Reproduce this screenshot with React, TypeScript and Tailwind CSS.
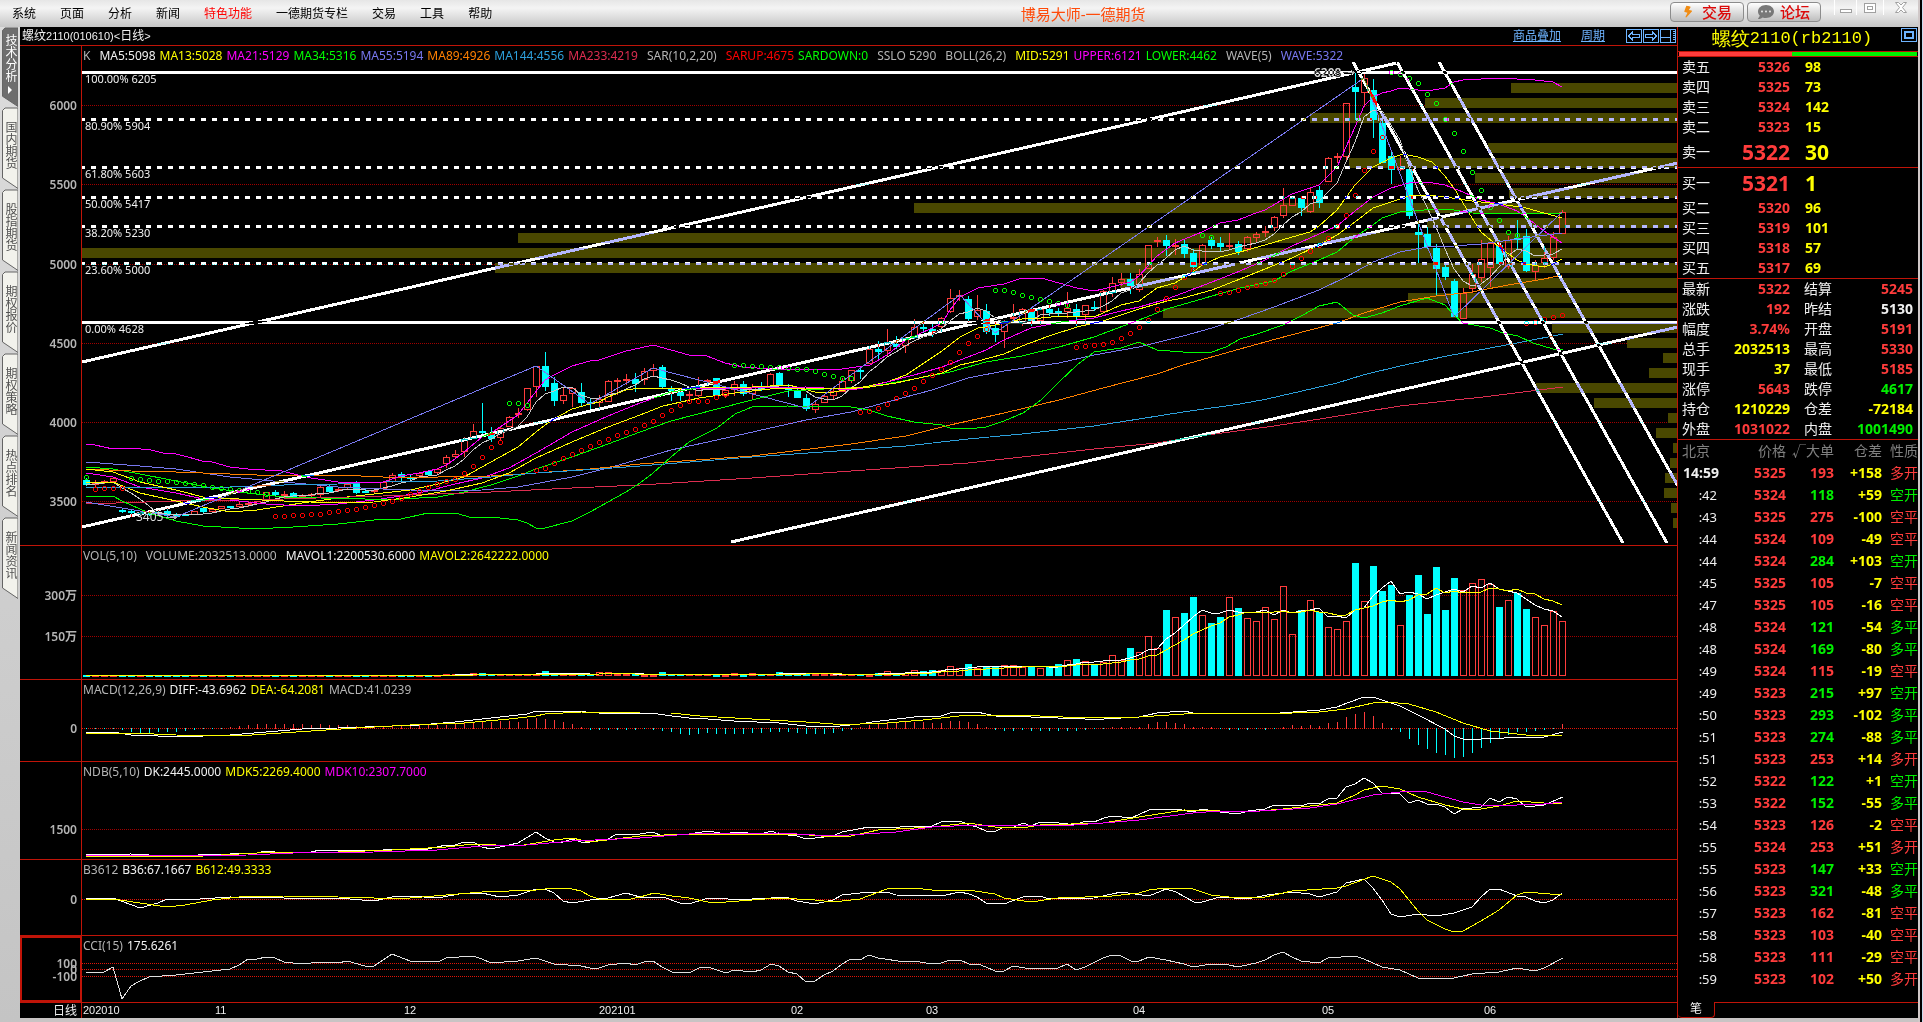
import { FaBolt, FaCommentDots } from "react-icons/fa";

const LEFT = 82;
const STEP = 9;
const xOf = (i: number) => 86 + i * STEP;

// c = falling, r = rising, then body top, body bottom, high, low
const CANDLES = `c480 485 478 486,r483 485 480 487,r481 483 480 484,r478 482 477 483,c510 511 509 513,c511 513 509 517,r512 513 511 516,c513 514 511 516,c512 514 510 516,c511 515 508 517,c514 517 513 518,c514 515 513 516,r511 515 511 515,c508 512 508 513,r509 512 508 513,r506 509 506 509,c506 508 506 509,r504 507 501 507,r503 505 501 507,r501 504 501 504,r492 500 492 501,c492 495 490 496,r494 495 491 498,c493 497 492 497,r495 496 494 498,r494 496 493 497,r487 495 485 497,c487 492 485 493,r489 490 487 492,r484 488 482 490,c484 493 481 494,c491 492 489 493,r490 492 488 494,r482 489 481 490,r475 482 473 483,c474 478 472 481,c477 478 475 481,r473 476 472 477,c471 475 470 476,r469 473 468 475,r457 464 455 468,r454 457 450 458,r439 452 437 457,r431 439 424 439,c431 433 403 434,c433 439 427 442,r428 438 426 441,r417 427 416 427,r413 415 408 418,r388 410 388 411,r366 387 366 397,c366 387 352 391,c383 401 377 406,r395 401 388 404,r388 394 387 407,c392 403 383 406,c402 404 398 409,r399 403 395 409,r381 402 380 402,r380 382 378 395,r379 380 374 385,c379 384 373 392,
r371 380 368 385,r368 371 364 376,c367 387 365 388,c388 391 386 401,c392 396 388 401,r394 395 391 402,r386 396 377 397,r380 381 379 385,c378 395 378 395,r390 396 388 398,r384 390 381 396,c384 394 381 396,r387 394 384 400,c387 389 382 391,r374 387 373 388,c373 385 372 385,c388 390 384 397,c391 398 389 398,c398 409 394 411,r404 410 402 413,r396 403 395 403,r391 396 389 400,r381 392 378 392,r370 381 370 383,c370 371 367 379,r349 364 346 364,c349 352 341 360,r342 351 329 357,c344 347 336 349,r338 346 337 353,r327 338 319 339,c327 329 322 333,c329 332 324 337,r318 327 317 332,r298 312 289 313,r295 297 290 301,c299 319 296 322,r310 317 295 320,c311 332 304 334,c328 335 322 342,r321 332 320 348,r317 318 304 322,r309 323 308 326,c309 321 308 326,r309 321 308 325,c309 313 305 316,c311 313 308 317,r308 312 292 318,c309 316 304 326,r305 315 305 325,c307 309 301 311,r291 312 290 313,r283 293 277 297,r279 283 273 286,c279 286 273 294,r274 290 269 292,r245 269 245 269,r240 242 237 247,c240 246 235 256,r245 246 239 255,c244 254 240 258,c253 267 249 270,
r245 265 244 266,c240 246 237 249,c243 247 237 251,r245 246 233 250,c244 252 241 255,r237 249 236 252,r234 238 232 242,r231 233 226 237,r217 228 216 231,r205 216 188 218,r198 206 197 206,c198 208 196 216,r192 212 187 213,c190 203 186 208,r158 182 157 182,r156 158 153 163,r103 157 103 160,c87 92 73 120,r78 93 74 107,c90 120 79 138,c123 163 121 163,c156 170 151 184,r167 170 156 171,c169 216 168 219,c232 235 222 263,c234 247 227 249,c248 269 244 295,c267 277 265 280,c281 317 279 317,r293 319 288 319,r274 289 264 293,r259 278 240 282,r243 268 243 287,c245 264 240 264,r240 267 236 269,c238 239 220 249,c236 271 229 272,r265 272 260 281,r258 263 246 268,r237 258 232 260,r212 234 210 234`
  .split(",")
  .map((s) => {
    const t = s.trim();
    const [top, bottom, high, low] = t.slice(1).split(" ").map(Number);
    return { up: t[0] === "r", top, bottom, high, low };
  });

const VOLUME_TAIL = [
  675, 675, 672, 674, 674, 674, 674, 674, 675, 675, 673, 675, 673, 674, 674, 672,
  673, 673, 673, 674, 674, 674, 674, 674, 674, 675, 673, 671, 674, 673, 670, 671,
  670, 670, 666, 668, 664, 668, 666, 667, 665, 665, 667, 667, 668, 667, 664, 660,
  659, 661, 664, 662, 655, 660, 648, 652, 636, 648, 610, 617, 613, 597, 615, 623,
  617, 597, 608, 618, 621, 607, 619, 586, 634, 610, 600, 612, 627, 629, 621, 563,
  601, 566, 591, 585, 625, 595, 575, 614, 567, 610, 578, 590, 583, 579, 584, 607,
  600, 593, 609, 617, 625, 611, 621,
];
const VOLUMES = CANDLES.map((_, i) => {
  if (i >= 62) return VOLUME_TAIL[i - 62];
  if (i === 51) return 671;
  if (i === 57 || i === 58) return 672;
  if (i === 43 || i === 44) return 673;
  return i >= 40 ? 674 : 675;
});

const MACD = [
  0, 0, 0, 0, -1, -3, -4, -4, -3, -3, -3, -2, -1, 0, 0, 0, 1, 2, 3, 4, 4, 4, 4, 4,
  4, 3, 4, 3, 3, 3, 2, 2, 2, 2, 2, 3, 3, 3, 3, 3, 3, 4, 5, 5, 6, 6, 7, 7, 6, 9, 10,
  9, 8, 6, 4, 1, -1, -1, -1, -1, -1, -1, 0, -1, -2, -3, -5, -6, -5, -4, -5, -5, -5,
  -5, -4, -4, -3, -3, -3, -4, -5, -5, -5, -4, -2, -1, 1, 3, 5, 6, 6, 6, 6, 6, 5, 5,
  7, 7, 6, 4, 1, -1, -2, -2, -1, -2, -2, -2, -2, -2, -2, -1, 0, 0, 1, 1, 1, 1, 4,
  6, 6, 5, 4, 1, 1, 1, 0, -1, -1, -1, 0, -1, 0, 1, 3, 2, 3, 2, 5, 6, 11, 14, 16,
  12, 5, -1, -3, -10, -16, -20, -24, -26, -29, -28, -24, -19, -14, -10, -6, -3, -3,
  -2, -1, 0, 4,
];

function average(values: number[], size: number) {
  return values
    .map((_, i) => {
      const part = values.slice(Math.max(0, i - size + 1), i + 1);
      const mean = part.reduce((a, b) => a + b, 0) / part.length;
      return `${xOf(i)},${Math.round(mean)}`;
    })
    .join(" ");
}

const MA5 = average(
  CANDLES.map((c) => (c.up ? c.top : c.bottom)),
  5,
);

const PRICE_LINES: [string, string][] = [
  ["#c8c8c8", MA5],
  // MA13
  ["#ffff00", "86,482 113,482 140,493 176,501 203,507 230,512 257,510 302,503 338,498 374,494 410,490 438,484 464,477 482,467 500,457 518,447 536,432 545,425 554,419 572,409 590,404 599,402 608,397 626,390 640,388 690,388 752,387 789,385 797,387 815,392 828,393 851,389 869,386 887,382 906,375 924,363 942,351 960,337 978,328 986,327 1004,323 1022,319 1041,318 1061,316 1094,317 1103,313 1121,305 1139,301 1157,288 1175,283 1193,272 1202,265 1220,257 1240,252 1265,245 1292,237 1310,232 1319,226 1337,210 1355,185 1373,167 1391,158 1403,154 1418,157 1432,162 1445,176 1454,188 1472,218 1481,232 1499,247 1517,260 1526,264 1544,267 1553,264 1562,259"],
  // MA21
  ["#ff00ff", "86,473 113,477 140,487 176,493 203,499 239,501 266,504 302,506 338,504 374,500 401,496 428,491 455,484 482,478 509,468 536,453 572,432 608,416 640,403 671,392 699,388 752,388 806,387 824,388 851,390 869,387 887,382 914,375 942,367 968,357 986,350 1004,340 1031,328 1061,322 1094,318 1121,311 1139,307 1167,299 1183,293 1212,282 1240,271 1265,260 1292,246 1319,234 1337,226 1355,211 1373,197 1391,188 1409,183 1427,182 1445,185 1463,192 1481,200 1499,204 1517,211 1526,217 1544,231 1562,243"],
  // MA34
  ["#00ff00", "86,467 113,469 140,474 176,481 212,488 248,493 284,497 320,498 365,499 401,499 438,497 464,492 491,485 518,476 536,469 572,457 608,444 640,432 671,421 717,409 752,400 788,391 824,389 869,387 914,379 950,372 986,362 1022,356 1059,347 1094,337 1139,320 1167,309 1212,296 1240,288 1274,281 1292,271 1319,260 1337,252 1355,237 1373,225 1382,218 1400,212 1436,209 1454,210 1472,213 1562,214"],
  // MA55
  ["#7878f0", "86,462 140,466 176,469 230,477 284,482 338,487 383,489 438,491 482,490 518,487 545,482 572,477 608,468 640,459 671,450 717,440 806,420 851,412 887,402 932,390 968,378 1004,371 1059,363 1094,355 1139,347 1183,336 1212,328 1240,319 1274,307 1319,290 1346,277 1373,262 1400,252 1427,247 1454,246 1481,244 1517,239 1562,233"],
  // MA89
  ["#ff8000", "86,469 131,471 176,472 257,475 338,475 383,477 438,477 491,476 536,473 590,469 640,464 752,456 851,444 906,436 950,425 1004,413 1059,400 1103,388 1157,374 1183,365 1240,349 1276,339 1310,330 1337,323 1364,313 1400,302 1436,296 1472,292 1508,285 1544,279 1562,275"],
  // MA144
  ["#2da0dc", "86,488 122,487 203,488 284,485 338,484 383,482 438,481 491,477 536,473 599,469 640,466 752,457 851,450 906,446 968,439 1022,434 1094,426 1139,419 1183,412 1240,404 1267,399 1337,383 1363,375 1400,366 1447,356 1517,343 1563,334"],
  // MA233
  ["#dc2d50", "86,504 176,501 284,499 383,496 491,492 572,488 640,485 752,478 851,471 968,463 1094,449 1157,443 1200,436 1267,427 1320,419 1400,406 1483,397 1563,387"],
  // BOLL MID, UPPER, LOWER
  ["#ffff00", "86,469 113,472 140,482 176,490 203,497 239,499 284,501 338,503 374,502 410,497 446,491 482,483 509,473 536,458 572,442 608,427 640,415 663,406 699,398 735,393 770,389 806,388 851,388 870,387 896,383 914,379 942,373 960,365 978,361 1004,354 1022,346 1049,336 1077,327 1103,321 1139,309 1167,301 1183,298 1212,290 1240,279 1265,269 1292,258 1319,245 1337,235 1355,222 1373,208 1391,202 1409,196 1427,195 1445,197 1472,201 1499,204 1526,208 1544,213 1562,218"],
  ["#ff00ff", "86,444 95,445 113,449 131,448 151,450 163,453 176,454 188,457 202,461 212,462 230,467 248,469 282,471 294,474 311,478 338,482 356,483 365,482 383,482 401,476 419,473 437,469 446,465 455,459 464,452 482,437 491,433 509,421 518,415 527,403 545,380 554,375 572,366 590,361 599,360 608,357 626,351 640,348 653,345 671,350 689,355 707,356 725,363 743,367 770,369 842,369 870,365 887,355 906,340 932,328 942,323 950,310 960,297 978,288 1004,284 1022,278 1041,278 1059,283 1077,288 1094,291 1103,289 1131,282 1139,276 1157,256 1175,243 1202,232 1220,223 1238,220 1256,213 1265,210 1292,194 1319,185 1337,167 1355,127 1364,106 1373,97 1382,93 1391,91 1400,88 1427,91 1445,88 1454,82 1463,80 1499,78 1535,80 1553,82 1562,87"],
  ["#00ff00", "86,496 113,496 122,501 149,513 176,521 203,526 239,528 273,528 293,527 338,524 374,520 401,519 428,513 455,513 473,518 491,517 518,520 527,523 536,528 545,528 572,521 590,512 608,502 626,492 640,483 653,473 671,457 689,442 717,428 735,414 752,407 788,406 806,407 833,406 851,407 869,410 887,416 914,422 942,425 950,428 968,429 986,427 1004,421 1023,413 1041,400 1059,382 1077,365 1094,352 1121,348 1139,342 1157,350 1183,352 1212,352 1226,347 1240,339 1257,334 1283,325 1303,315 1319,306 1337,302 1353,315 1364,318 1382,313 1400,306 1427,298 1445,305 1454,315 1463,323 1490,328 1503,333 1518,336 1533,343 1553,349 1563,350"],
  // WAVE
  ["#7878f0", "86,502 176,517 536,366 590,404 653,368 806,408 960,295 995,333 1364,78 1454,317 1562,212"],
];

// first bar index, then one y per bar
const SAR_DOWN: [number, number[]][] = [
  [0, [477]],
  [5, [478, 479, 480, 481, 481, 482, 483, 484, 485, 487, 488, 489, 490, 491, 492, 494]],
  [47, [403, 403, 405]],
  [72, [365, 365, 366, 366, 367, 367, 368, 369, 369, 371, 374, 376, 378, 378]],
  [101, [290, 290, 292, 295, 297, 299, 301, 303, 305]],
  [124, [235, 237]],
  [145, [72, 74, 78, 83, 94, 103, 119, 133, 151, 172, 190, 207, 220, 232, 235]],
];
const SAR_UP: [number, number[]][] = [
  [1, [489, 488, 488, 488]],
  [21, [516, 516, 515, 515, 514, 514, 512, 511, 510, 509, 507, 505, 503, 501, 498, 494, 491, 487, 484, 481, 479, 473, 466, 457, 447, 442]],
  [50, [470, 468, 463, 458, 454, 450, 446, 442, 439, 435, 432, 429, 425, 421, 415, 410, 405, 401, 401, 401, 397, 394]],
  [86, [412, 411, 408, 404, 398, 393, 388, 381, 375, 369, 362, 352, 343, 336, 329]],
  [110, [347, 346, 345, 344, 342, 338, 333, 327, 320, 309, 298, 287, 277, 270]],
  [126, [293, 292, 290, 287, 285, 283, 280, 274, 266, 258, 251, 245, 238, 226, 215, 195, 170, 151, 137]],
  [160, [323, 322, 319, 317, 315]],
];

// left edge and top of each volume-at-price bar
const PROFILE = [
  [1511, 83], [1425, 98], [1310, 113], [1488, 143], [1349, 158], [1475, 173],
  [1509, 188], [914, 203], [1427, 218], [518, 233], [82, 248], [495, 263],
  [1120, 278], [1408, 293], [1163, 308], [1552, 323], [1627, 338], [1663, 353],
  [1649, 368], [1536, 383], [1594, 398], [1668, 413], [1656, 428], [1673, 443],
  [1670, 458], [1665, 473], [1664, 488], [1671, 503], [1673, 518],
];

const FIB = [
  { y: 72, label: "100.00% 6205", solid: true },
  { y: 119, label: "80.90% 5904", solid: false },
  { y: 167, label: "61.80% 5603", solid: false },
  { y: 197, label: "50.00% 5417", solid: false },
  { y: 226, label: "38.20% 5230", solid: false },
  { y: 263, label: "23.60% 5000", solid: false },
  { y: 322, label: "0.00% 4628", solid: true },
];

const TREND = [
  [82, 362, 1397, 63],
  [82, 527, 1678, 163],
  [731, 542, 1678, 327],
  [1353, 62, 1623, 543],
  [1397, 62, 1667, 543],
  [1439, 62, 1678, 486],
];

const MACD_LINES: [string, string][] = [
  ["#ffffff", "86,733 113,732 131,735 158,736 203,736 230,735 266,732 302,729 338,728 392,726 419,725 455,722 482,719 509,716 527,714 536,711 572,711 599,713 651,713 672,716 689,718 708,719 734,721 779,723 815,727 840,726 860,724 872,722 914,717 941,716 950,713 977,712 995,716 1031,717 1085,719 1104,719 1139,717 1157,713 1184,711 1193,713 1267,714 1320,710 1337,707 1347,703 1364,697 1373,697 1400,706 1418,715 1445,729 1454,736 1463,739 1481,739 1490,738 1499,739 1510,737 1544,737 1563,732"],
  ["#ffff00", "86,733 131,733 176,735 239,736 266,734 311,731 356,728 410,725 464,723 509,719 536,716 545,714 581,712 640,713 671,713 700,716 752,719 806,722 833,724 860,724 887,723 923,720 959,716 986,715 1040,716 1085,718 1139,717 1184,714 1202,713 1292,713 1319,712 1346,709 1373,703 1386,702 1409,704 1436,712 1463,723 1490,731 1526,735 1562,735"],
];

const NDB_LINES: [string, string][] = [
  ["#ffffff", "86,855 131,854 167,856 230,854 257,853 266,851 284,853 311,852 320,850 347,850 374,851 392,849 401,850 428,849 446,845 455,845 464,842 473,842 482,847 491,849 509,845 518,843 536,832 545,838 554,842 563,842 572,839 581,842 590,842 608,839 617,834 640,834 653,832 662,836 689,834 708,831 726,834 734,832 761,834 771,831 779,834 797,836 806,839 824,837 835,835 842,832 869,827 896,828 904,826 932,826 941,822 960,821 969,825 977,827 986,831 996,831 1004,827 1014,827 1023,823 1031,826 1040,822 1059,823 1076,825 1085,821 1094,822 1104,818 1112,816 1131,818 1149,810 1176,809 1193,812 1202,809 1220,812 1238,814 1248,811 1265,809 1274,805 1301,806 1310,803 1319,804 1328,799 1337,798 1346,787 1355,784 1364,778 1373,783 1382,793 1400,794 1409,803 1418,800 1427,804 1436,804 1445,807 1454,814 1463,809 1481,807 1490,798 1499,802 1508,797 1517,799 1526,807 1544,805 1563,797"],
  ["#ffff00", "86,856 203,856 257,853 338,852 392,850 446,847 473,844 518,846 554,840 572,838 590,842 640,836 689,834 797,834 833,837 851,836 878,830 932,827 968,823 995,827 1022,828 1040,825 1103,823 1139,817 1184,810 1220,811 1247,812 1283,809 1337,803 1355,795 1364,790 1382,786 1400,789 1418,797 1445,805 1463,809 1481,809 1499,806 1517,801 1544,803 1562,803"],
  ["#ff00ff", "86,856 248,855 293,853 374,852 437,850 482,846 527,845 572,841 640,838 689,834 779,833 833,836 896,832 932,827 977,825 1059,826 1103,823 1139,820 1193,813 1220,811 1260,811 1310,808 1337,804 1373,795 1409,791 1427,792 1445,797 1463,802 1481,805 1517,805 1544,804 1562,802"],
];

const B3612_LINES: [string, string][] = [
  ["#ffffff", "86,899 113,898 140,908 158,903 167,899 185,900 230,897 284,898 311,899 338,898 374,901 392,897 410,896 438,898 464,893 482,893 500,897 518,895 536,889 545,889 554,893 563,901 572,903 590,900 608,898 626,893 640,897 663,897 680,903 689,904 708,898 722,898 734,900 771,898 786,897 797,901 815,904 833,900 842,895 869,892 887,892 896,895 941,896 960,892 969,894 977,897 986,903 1004,904 1023,897 1040,896 1049,899 1094,898 1121,892 1149,896 1166,889 1176,892 1194,902 1202,902 1220,897 1247,899 1267,895 1292,892 1310,894 1319,897 1337,892 1346,883 1364,879 1373,888 1382,900 1391,914 1400,917 1418,914 1436,916 1454,913 1472,907 1481,897 1490,889 1499,889 1517,896 1526,897 1535,901 1544,903 1553,900 1562,893"],
  ["#ffff00", "86,899 113,899 140,903 167,907 185,905 212,900 239,897 284,896 311,896 338,897 374,898 410,898 446,895 482,892 536,890 554,888 572,889 581,891 590,896 599,899 626,900 640,897 654,893 672,896 689,898 708,902 726,902 752,900 779,898 815,900 833,902 860,899 887,889 914,888 941,891 968,890 995,894 1004,898 1031,902 1058,898 1112,896 1139,893 1149,890 1166,888 1184,888 1193,889 1211,895 1238,898 1265,897 1292,891 1337,888 1346,886 1373,876 1391,882 1400,889 1418,911 1427,920 1445,929 1454,932 1463,931 1472,926 1481,921 1499,910 1517,895 1526,892 1562,895"],
];

const CCI_LINES: [string, string][] = [
  ["#e0e0e0", "86,973 104,972 113,967 122,999 131,986 140,981 149,977 176,975 230,969 239,965 248,959 257,959 266,957 275,958 284,962 302,964 320,962 338,963 347,961 365,966 374,966 392,954 410,961 438,962 446,958 473,956 482,959 491,963 518,961 536,958 554,964 581,966 590,968 599,968 608,965 626,963 635,965 644,962 653,961 662,967 672,972 689,973 699,968 708,967 726,973 734,970 752,972 761,970 771,964 779,966 788,972 797,974 806,982 815,981 824,975 833,971 842,964 851,959 860,960 869,955 878,958 905,962 914,961 932,964 941,963 950,960 960,960 969,964 978,964 986,967 995,971 1004,971 1013,966 1031,969 1058,968 1067,964 1076,970 1085,967 1103,958 1112,955 1121,956 1131,961 1139,961 1149,957 1166,960 1184,964 1193,967 1211,964 1229,965 1238,967 1256,963 1265,960 1274,955 1283,952 1292,957 1301,961 1319,963 1328,958 1355,956 1364,959 1382,967 1400,970 1418,978 1436,979 1454,978 1472,974 1499,972 1517,968 1535,971 1544,968 1563,958"],
];

const DATES: [number, string][] = [
  [83, "202010"], [215, "11"], [404, "12"], [599, "202101"], [791, "02"],
  [926, "03"], [1133, "04"], [1322, "05"], [1484, "06"],
];

const RED = "text-[#ff3c3c]";
const GREEN = "text-[#00f000]";
const YELLOW = "text-[#ffff00]";
const WHITE = "text-[#f0f0f0]";
const GRAY = "text-[#b4b4b4]";

const MENU = ["系统", "页面", "分析", "新闻", "特色功能", "一德期货专栏", "交易", "工具", "帮助"];
const TABS = ["技术分析", "国内期货", "股指期货", "期权报价", "期权策略", "热点排名", "新闻资讯"];

const ASKS = [["卖五", "5326", "98"], ["卖四", "5325", "73"], ["卖三", "5324", "142"], ["卖二", "5323", "15"], ["卖一", "5322", "30"]];
const BIDS = [["买一", "5321", "1"], ["买二", "5320", "96"], ["买三", "5319", "101"], ["买四", "5318", "57"], ["买五", "5317", "69"]];

const STATS = [
  ["最新", "5322", RED, "结算", "5245", RED],
  ["涨跌", "192", RED, "昨结", "5130", WHITE],
  ["幅度", "3.74%", RED, "开盘", "5191", RED],
  ["总手", "2032513", YELLOW, "最高", "5330", RED],
  ["现手", "37", YELLOW, "最低", "5185", RED],
  ["涨停", "5643", RED, "跌停", "4617", GREEN],
  ["持仓", "1210229", YELLOW, "仓差", "-72184", YELLOW],
  ["外盘", "1031022", RED, "内盘", "1001490", GREEN],
];

const TICKS = `14:59 5325 193 +158 多开 r,:42 5324 118 +59 空开 g,:43 5325 275 -100 空平 r,:44 5324 109 -49 空平 r,:44 5324 284 +103 空开 g,:45 5325 105 -7 空平 r,:47 5325 105 -16 空平 r,:48 5324 121 -54 多平 g,:48 5324 169 -80 多平 g,:49 5324 115 -19 空平 r,:49 5323 215 +97 空开 g,:50 5323 293 -102 多平 g,:51 5323 274 -88 多平 g,:51 5323 253 +14 多开 r,:52 5322 122 +1 空开 g,:53 5322 152 -55 多平 g,:54 5323 126 -2 空平 r,:55 5324 253 +51 多开 r,:55 5323 147 +33 空开 g,:56 5323 321 -48 多平 g,:57 5323 162 -81 空平 r,:58 5323 103 -40 空平 r,:58 5323 111 -29 空平 r,:59 5323 102 +50 多开 r`
  .split(",")
  .map((s) => s.split(" "));

function Legend({ groups }: { groups: [string, string][][] }) {
  return (
    <div className="absolute top-px left-px flex gap-[9px] text-[12px] leading-[18px] whitespace-pre">
      {groups.map((group) => (
        <div key={group[0][0]} className="flex gap-1">
          {group.map(([text, color]) => (
            <span key={text} className={color}>
              {text}
            </span>
          ))}
        </div>
      ))}
    </div>
  );
}

type PanelProps = {
  top: number;
  size: string;
  axis: [number, string][];
  legend: [string, string][][];
  grid?: string;
  active?: boolean;
  children: React.ReactNode;
};

function Panel({ top, size, axis, legend, grid = "#a00000", active, children }: PanelProps) {
  return (
    <section className={`flex border-b border-[#c01408] ${size}`}>
      <svg
        className={`h-full w-[62px] shrink-0 border-[#c01408] ${active ? "border-2" : "border-r"}`}
        overflow="visible"
      >
        {axis.map(([y, label]) => (
          <text
            key={label}
            x={active ? 55 : 57}
            y={y - top + (active ? 3 : 5)}
            textAnchor="end"
            fontSize="12"
            fontWeight="600"
            fill="#b4b4b4"
          >
            {label}
          </text>
        ))}
      </svg>
      <div className="relative min-w-0 flex-1">
        <svg className="h-full w-full" shapeRendering="crispEdges">
          <g transform={`translate(-${LEFT},-${top})`}>
            {axis.map(([y]) => (
              <line key={y} x1={LEFT} x2="200%" y1={y + 0.5} y2={y + 0.5} stroke={grid} strokeDasharray="1 1" />
            ))}
            {children}
          </g>
        </svg>
        <Legend groups={legend} />
      </div>
    </section>
  );
}

function Lines({ items }: { items: [string, string][] }) {
  return (
    <>
      {items.map(([color, points], i) => (
        <polyline key={i} points={points} fill="none" stroke={color} />
      ))}
    </>
  );
}

function Circles({ runs, color }: { runs: [number, number[]][]; color: string }) {
  return (
    <g fill="none" stroke={color}>
      {runs.map(([start, ys]) =>
        ys.map((y, k) => <circle key={start + k} cx={xOf(start + k) + 0.5} cy={y + 0.5} r="2" />),
      )}
    </g>
  );
}

function PriceChart() {
  return (
    <>
      {PROFILE.map(([x, y]) => (
        <rect key={y} x={x} y={y} width="100%" height="10" fill="#4a4800" />
      ))}
      {CANDLES.map((c, i) => {
        const x = xOf(i);
        const color = c.up ? "#ff3c3c" : "#00ffff";
        return (
          <g key={i} stroke={color}>
            <line x1={x + 0.5} x2={x + 0.5} y1={c.high} y2={c.top} />
            <line x1={x + 0.5} x2={x + 0.5} y1={c.bottom} y2={c.low} />
            <rect
              x={x - 2.5}
              y={c.top + 0.5}
              width="6"
              height={Math.max(1, c.bottom - c.top - 1)}
              fill={c.up ? "none" : color}
            />
          </g>
        );
      })}
      <Lines items={PRICE_LINES} />
      <Circles runs={SAR_DOWN} color="#00ff00" />
      <Circles runs={SAR_UP} color="#ff0000" />
      <text x="136" y="521" fontSize="12" fill="#dcdcdc">3405</text>
      <path d="M166 517.5H176M173 515l3 2.5-3 2.5" fill="none" stroke="#b4b4b4" />
      {FIB.map((f) => (
        <g key={f.label}>
          <line
            className="mix-blend-difference"
            x1={LEFT}
            x2="200%"
            y1={f.y + 0.5}
            y2={f.y + 0.5}
            stroke="#fff"
            strokeWidth="3"
            strokeDasharray={f.solid ? undefined : "5 6"}
            strokeDashoffset={f.solid ? undefined : 2}
          />
          <text x="85" y={f.y + 11} fontSize="11" fill="#f0f0f0">
            {f.label}
          </text>
        </g>
      ))}
      {TREND.map(([x1, y1, x2, y2]) => (
        <line key={`${x1}-${y1}`} className="mix-blend-difference" x1={x1} y1={y1} x2={x2} y2={y2} stroke="#fff" strokeWidth="3" />
      ))}
      <text className="mix-blend-difference" x="1314" y="77" fontSize="12" fontWeight="600" fill="#dcdcdc">6208</text>
      <path className="mix-blend-difference" d="M1343 72.5H1354M1351 70l3 2.5-3 2.5" fill="none" stroke="#b4b4b4" />
    </>
  );
}

function QuoteRows({ rows }: { rows: string[][] }) {
  return (
    <table className="w-full table-fixed border-b border-[#c01408] text-[14px] leading-5">
      <tbody>
        {rows.map(([label, price, volume]) => {
          const best = label.endsWith("一");
          return (
            <tr key={label} className={best ? "h-[30px]" : "h-5"}>
              <th className="w-[50px] p-0 pl-1 text-left font-normal text-[#f0f0f0]">{label}</th>
              <td className={`w-[62px] p-0 text-right font-bold ${RED} ${best ? "text-[21px]" : ""}`}>{price}</td>
              <td className={`p-0 pl-[15px] font-bold ${YELLOW} ${best ? "text-[21px]" : ""}`}>{volume}</td>
            </tr>
          );
        })}
      </tbody>
    </table>
  );
}

function QuotePanel() {
  return (
    <aside className="flex w-[241px] shrink-0 flex-col border-l border-[#c01408] bg-black">
      <header className="relative flex h-6 items-center justify-center pr-3 leading-6 text-[#ffff00]">
        <span className="font-serif text-[19px] font-medium">螺纹</span>
        <span className="font-[Liberation_Mono] text-[17px]">2110(rb2110)</span>
        <svg className="absolute top-px right-px" width="16" height="14" fill="none" stroke="#6eb4ff">
          <rect x="0.5" y="0.5" width="15" height="13" />
          <rect x="4" y="4" width="8" height="6" strokeWidth="2" />
        </svg>
      </header>
      <div className="flex h-1.5 border-y border-[#c01408] px-px">
        <div className="w-[113px] bg-[#ff3c3c]" />
        <div className="flex-1 bg-[#00f000]" />
      </div>
      <QuoteRows rows={ASKS} />
      <QuoteRows rows={BIDS} />
      <table className="w-full table-fixed border-b border-[#c01408] text-[14px] leading-5">
        <tbody>
          {STATS.map(([a, av, ac, b, bv, bc]) => (
            <tr key={a} className="h-5">
              <th className="w-[42px] p-0 pl-1 text-left font-normal text-[#f0f0f0]">{a}</th>
              <td className={`w-[70px] p-0 text-right font-bold ${ac}`}>{av}</td>
              <th className="w-[57px] p-0 pl-[14px] text-left font-normal text-[#f0f0f0]">{b}</th>
              <td className={`p-0 pr-[5px] text-right font-bold ${bc}`}>{bv}</td>
            </tr>
          ))}
        </tbody>
      </table>
      <table className="w-full table-fixed text-right text-[14px] leading-[22px]">
        <thead>
          <tr className="h-[22px] text-[#808080]">
            <th className="w-[41px] p-0 pl-1 text-left font-normal">北京</th>
            <th className="w-[67px] p-0 font-normal">价格</th>
            <th className="w-12 p-0 font-normal">√大单</th>
            <th className="w-12 p-0 font-normal">仓差</th>
            <th className="p-0 font-normal">性质</th>
          </tr>
        </thead>
        <tbody className="font-bold">
          {TICKS.map(([time, price, size, diff, kind, side], i) => (
            <tr key={i} className="h-[22px]">
              <td className={`p-0 ${WHITE} ${i ? "pr-[2px] text-[13px] font-normal" : ""}`}>{time}</td>
              <td className={`p-0 ${RED}`}>{price}</td>
              <td className={`p-0 ${side === "r" ? RED : GREEN}`}>{size}</td>
              <td className={`p-0 ${YELLOW}`}>{diff}</td>
              <td className={`p-0 font-normal ${side === "r" ? RED : GREEN}`}>{kind}</td>
            </tr>
          ))}
        </tbody>
      </table>
      <div className="mt-3 flex h-4">
        <button className="w-[37px] rounded-b-sm border-r border-b border-[#c01408] text-[12px] leading-[14px] text-[#f0f0f0]">
          笔
        </button>
        <div className="flex-1 border-t border-[#c01408]" />
      </div>
    </aside>
  );
}

function TopBar() {
  return (
    <header className="flex h-[27px] items-center bg-linear-to-b from-[#e6e6e6] via-[#f4f4f4] via-30% to-[#c6c6c6] text-[12px]">
      <nav className="flex gap-6 pl-3 text-black">
        {MENU.map((item) => (
          <button key={item} className={item === "特色功能" ? "text-[#ff0000]" : ""}>
            {item}
          </button>
        ))}
      </nav>
      <h1 className="flex-1 pl-1 text-center text-[15px] leading-[24px] text-[#ff4b0a]">博易大师-一德期货</h1>
      <div className="flex gap-[3px] self-start pt-0.5">
        <button className="flex h-5 w-[74px] items-center justify-center gap-2 rounded-[4px] border border-[#8c8c8c] bg-linear-to-b from-white to-[#bebebe] text-[15px] font-medium text-[#dc0a0a]">
          <FaBolt className="size-3 rotate-12 text-[#f08c14]" />
          交易
        </button>
        <button className="flex h-5 w-[74px] items-center justify-center gap-1.5 rounded-[4px] border border-[#8c8c8c] bg-linear-to-b from-white to-[#bebebe] text-[15px] font-medium text-[#dc0a0a]">
          <FaCommentDots className="size-4 text-[#787878]" />
          论坛
        </button>
      </div>
      <div className="ml-[13px] flex h-[15px] w-[84px] self-start text-[#b4b4b4]">
        <button aria-label="最小化" className="flex w-[22px] items-end justify-center border-l border-white pb-0.5">
          <svg width="12" height="4" fill="#fff" stroke="#a0a0a0"><rect x="0.5" y="0.5" width="11" height="3" /></svg>
        </button>
        <button aria-label="还原" className="flex w-[27px] items-center justify-center border-l border-white">
          <svg width="12" height="10" fill="#fff" stroke="#a0a0a0"><rect x="0.5" y="0.5" width="11" height="9" /><rect x="3.5" y="3.5" width="5" height="3" /></svg>
        </button>
        <button aria-label="关闭" className="flex flex-1 items-center justify-center border-l border-white">
          <svg width="12" height="11" fill="#fff" stroke="#a0a0a0"><path d="M0.5 0.5h3L6 3l2.500-2.500h3L7.500 5.500l4 5h-3L6 8l-2.500 2.500h-3l4-5z" /></svg>
        </button>
      </div>
    </header>
  );
}

function SideTabs() {
  return (
    <nav className="flex w-5 shrink-0 flex-col bg-linear-to-b from-[#dcdcdc] to-[#c4c4c4]">
      {TABS.map((tab, i) => (
        <button
          key={tab}
          className={`relative flex w-[18px] shrink-0 flex-col items-center justify-center gap-1 pb-1.5 pl-0.5 text-[12px] leading-3 ${i ? "h-[82px] text-[#505050]" : "h-20 text-white"}`}
        >
          <svg className="absolute inset-0 h-full w-full" viewBox="0 0 18 82" preserveAspectRatio="none">
            <path d="M18 1H5L2.500 3.500V71L18 81.500z" fill={i ? "#f2f2ec" : "#6e6e6e"} stroke="#646464" />
          </svg>
          <span className="relative [writing-mode:vertical-rl]">{tab}</span>
          {i === 0 && (
            <svg className="relative" width="4" height="8" fill="#fff"><path d="M0 0l4 4-4 4z" /></svg>
          )}
        </button>
      ))}
    </nav>
  );
}

function ChartHeader() {
  return (
    <div className="flex h-[19px] items-center border-b border-[#c01408] pl-0.5 text-[12px] leading-[18px]">
      <h2 className="text-[#f0f0f0]">
        螺纹<span className="font-[Liberation_Sans] text-[11px]">2110(010610)&lt;</span>日线
        <span className="font-[Liberation_Sans] text-[11px]">&gt;</span>
      </h2>
      <div className="ml-auto flex items-center text-[#6eb4ff]">
        <a href="#overlay" className="mr-5 underline">商品叠加</a>
        <a href="#period" className="mr-[21px] underline">周期</a>
        <svg width="51" height="14" fill="none" stroke="currentColor" shapeRendering="crispEdges">
          <path d="M0.500 0.500h15v13h-15zM17.500 0.500h15v13h-15zM34.500 0.500h15v13h-15z" />
          <path d="M2.500 7l4-4v2.500h7v3h-7V11zM30.500 7l-4-4v2.500h-7v3h7V11z" />
          <path d="M34.500 8.500h9M44.500 0.500v13" />
          <path d="M47.500 2v10" strokeWidth="2" strokeDasharray="1 1" />
        </svg>
      </div>
    </div>
  );
}

export default function App() {
  return (
    <div className="flex min-h-screen w-full flex-col bg-[#c8c4c4] font-[Noto_Sans,Noto_Sans_CJK_SC,sans-serif]">
      <div className="flex flex-1">
        <div className="flex min-w-0 flex-1 flex-col">
          <TopBar />
          <div className="flex flex-1">
            <SideTabs />
            <div className="mb-1 flex min-w-0 flex-1">
              <main className="flex min-w-0 flex-1 flex-col bg-black">
                <ChartHeader />
                <Panel
                  top={46}
                  size="h-[500px]"
                  axis={[[105, "6000"], [184, "5500"], [264, "5000"], [343, "4500"], [422, "4000"], [501, "3500"]]}
                  legend={[
                    [["K", GRAY]],
                    [
                      ["MA5:5098", WHITE],
                      ["MA13:5028", YELLOW],
                      ["MA21:5129", "text-[#ff00ff]"],
                      ["MA34:5316", "text-[#00ff00]"],
                      ["MA55:5194", "text-[#7878f0]"],
                      ["MA89:4926", "text-[#ff8000]"],
                      ["MA144:4556", "text-[#2da0dc]"],
                      ["MA233:4219", "text-[#dc2d50]"],
                    ],
                    [["SAR(10,2,20)", GRAY]],
                    [["SARUP:4675", "text-[#ff0000]"], ["SARDOWN:0", "text-[#00ff00]"]],
                    [["SSLO 5290", GRAY]],
                    [["BOLL(26,2)", GRAY]],
                    [
                      ["MID:5291", YELLOW],
                      ["UPPER:6121", "text-[#ff00ff]"],
                      ["LOWER:4462", "text-[#00ff00]"],
                    ],
                    [["WAVE(5)", GRAY]],
                    [["WAVE:5322", "text-[#7878f0]"]],
                  ]}
                >
                  <PriceChart />
                </Panel>
                <Panel
                  top={546}
                  size="h-[134px]"
                  axis={[[595, "300万"], [636, "150万"]]}
                  legend={[[["VOL(5,10)", GRAY]], [["VOLUME:2032513.0000", GRAY]], [["MAVOL1:2200530.6000", WHITE], ["MAVOL2:2642222.0000", YELLOW]]]}
                >
                  {VOLUMES.map((y, i) => {
                    const color = CANDLES[i].up ? "#ff3c3c" : "#00ffff";
                    return (
                      <rect
                        key={i}
                        x={xOf(i) - 2.5}
                        y={y + 0.5}
                        width="6"
                        height={675 - y || 1}
                        stroke={color}
                        fill={CANDLES[i].up ? "none" : color}
                      />
                    );
                  })}
                  <Lines items={[["#ffffff", average(VOLUMES, 5)], ["#ffff00", average(VOLUMES, 10)]]} />
                </Panel>
                <Panel
                  top={680}
                  size="h-[82px]"
                  grid="#e01408"
                  axis={[[728, "0"]]}
                  legend={[[["MACD(12,26,9)", GRAY], ["DIFF:-43.6962", WHITE], ["DEA:-64.2081", YELLOW], ["MACD:41.0239", GRAY]]]}
                >
                  {MACD.map((v, i) => (
                    <line
                      key={i}
                      x1={xOf(i) + 0.5}
                      x2={xOf(i) + 0.5}
                      y1={v > 0 ? 729 : 728}
                      y2={728 - v + (v > 0 ? 0 : 1)}
                      stroke={v > 0 ? "#ff3c3c" : "#00ffff"}
                    />
                  ))}
                  <Lines items={MACD_LINES} />
                </Panel>
                <Panel
                  top={762}
                  size="h-[98px]"
                  axis={[[829, "1500"]]}
                  legend={[[["NDB(5,10)", GRAY], ["DK:2445.0000", WHITE], ["MDK5:2269.4000", YELLOW], ["MDK10:2307.7000", "text-[#ff00ff]"]]]}
                >
                  <Lines items={NDB_LINES} />
                </Panel>
                <Panel
                  top={860}
                  size="h-[76px]"
                  grid="#e01408"
                  axis={[[899, "0"]]}
                  legend={[[["B3612", GRAY], ["B36:67.1667", WHITE], ["B612:49.3333", YELLOW]]]}
                >
                  <Lines items={B3612_LINES} />
                </Panel>
                <Panel
                  top={936}
                  size="h-[67px]"
                  grid="#e01408"
                  active
                  axis={[[963, "100"], [969, "0"], [976, "-100"]]}
                  legend={[[["CCI(15)", GRAY], ["175.6261", WHITE]]]}
                >
                  <Lines items={CCI_LINES} />
                </Panel>
                <div className="flex h-[15px] text-[12px] leading-[15px] text-[#f0f0f0]">
                  <div className="w-[62px] shrink-0 border-r border-[#c01408] pr-1 text-right">日线</div>
                  <svg className="h-full min-w-0 flex-1 font-[Liberation_Sans]">
                    {DATES.map(([x, label]) => (
                      <text key={label} x={x - LEFT} y="11" fontSize="11" fill="#f0f0f0">
                        {label}
                      </text>
                    ))}
                  </svg>
                </div>
              </main>
              <QuotePanel />
            </div>
          </div>
        </div>
        <div className="w-0.5 bg-[#d0c8c8]" />
        <div className="w-0.5 bg-black" />
        <div className="w-px bg-[#c8dcf0]" />
      </div>
    </div>
  );
}
